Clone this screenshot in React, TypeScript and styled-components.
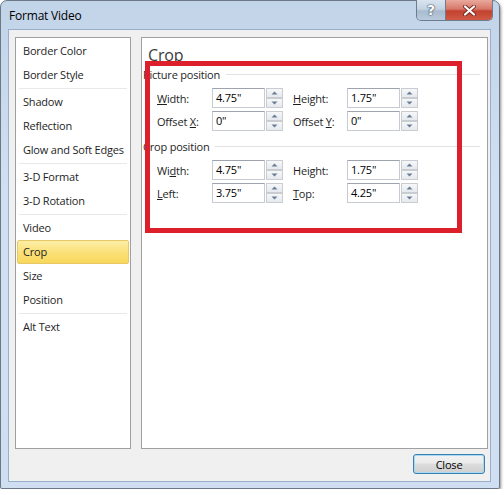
import styled, { createGlobalStyle } from "styled-components";

const GlobalStyle = createGlobalStyle`
  html, body {
    margin: 0;
    background: #ffffff;
  }
  body {
    font-family: "Open Sans", "Noto Sans", sans-serif;
    font-size: 11px;
    letter-spacing: -0.2px;
    color: #1e1e1e;
  }
`;

// access-key underline, has to exist before the field data below
const Key = styled.span`
  text-decoration: underline;
`;

type Field = { label: React.ReactNode; value: string };

const pictureFields: Field[] = [
  { label: <><Key>W</Key>idth:</>, value: '4.75"' },
  { label: <><Key>H</Key>eight:</>, value: '1.75"' },
  { label: <>Offset <Key>X</Key>:</>, value: '0"' },
  { label: <>Offset <Key>Y</Key>:</>, value: '0"' },
];

const cropFields: Field[] = [
  { label: <>Wi<Key>d</Key>th:</>, value: '4.75"' },
  { label: <>Hei<Key>g</Key>ht:</>, value: '1.75"' },
  { label: <><Key>L</Key>eft:</>, value: '3.75"' },
  { label: <><Key>T</Key>op:</>, value: '4.25"' },
];

const navGroups = [
  ["Border Color", "Border Style"],
  ["Shadow", "Reflection", "Glow and Soft Edges"],
  ["3-D Format", "3-D Rotation"],
  ["Video", "Crop", "Size", "Position"],
  ["Alt Text"],
];

function Spin() {
  return (
    <Spinner>
      <SpinButton>
        <svg width="7" height="4" viewBox="0 0 7 4">
          <path d="M0.5 3.5 L3.5 0.5 L6.5 3.5 Z" fill="#6a7d97" />
        </svg>
      </SpinButton>
      <SpinButton>
        <svg width="7" height="4" viewBox="0 0 7 4">
          <path d="M0.5 0.5 L3.5 3.5 L6.5 0.5 Z" fill="#6a7d97" />
        </svg>
      </SpinButton>
    </Spinner>
  );
}

function FieldGroup({ fields }: { fields: Field[] }) {
  return (
    <FieldGrid>
      {fields.map((f, i) => (
        <Cell key={i}>
          <FieldLabel>{f.label}</FieldLabel>
          <FieldBox>
            <TextBox>{f.value}</TextBox>
            <Spin />
          </FieldBox>
        </Cell>
      ))}
    </FieldGrid>
  );
}

export default function App() {
  return (
    <>
      <GlobalStyle />
      <Window>
        <TitleBar>
          <Title>Format Video</Title>
          <CaptionButtons>
            <HelpButton>?</HelpButton>
            <CloseCaption>
              <svg width="13" height="11" viewBox="0 0 13 11">
                <path d="M2 1.5 L11 9.5 M11 1.5 L2 9.5" stroke="#7a2a22" strokeWidth="4" strokeLinecap="round" />
                <path d="M2 1.5 L11 9.5 M11 1.5 L2 9.5" stroke="#ffffff" strokeWidth="2.2" strokeLinecap="round" />
              </svg>
            </CloseCaption>
          </CaptionButtons>
        </TitleBar>
        <Client>
          <Panes>
            <NavList>
              {navGroups.map((group, gi) => (
                <NavGroup key={gi}>
                  {gi > 0 && <NavSeparator />}
                  {group.map((item) => (
                    <NavItem key={item} $active={item === "Crop"}>
                      {item}
                    </NavItem>
                  ))}
                </NavGroup>
              ))}
            </NavList>
            <ContentPanel>
              <Heading>Crop</Heading>
              <SectionHeader>Picture position</SectionHeader>
              <FieldGroup fields={pictureFields} />
              <SectionHeader $top={7}>Crop position</SectionHeader>
              <FieldGroup fields={cropFields} />
              <Annotation />
            </ContentPanel>
          </Panes>
          <Footer>
            <DialogButton>Close</DialogButton>
          </Footer>
        </Client>
      </Window>
    </>
  );
}

const Window = styled.div`
  box-sizing: border-box;
  width: 500px;
  height: 489px;
  border: 1px solid #6c7888;
  border-radius: 7px 7px 2px 2px;
  background: linear-gradient(180deg, #c2d4e8 0%, #d1e0f1 40%, #cfdff1 100%);
  box-shadow: 1px 2px 3px rgba(0, 0, 0, 0.45);
  display: flex;
  flex-direction: column;
`;

const TitleBar = styled.div`
  height: 28px;
  display: flex;
  align-items: flex-start;
  padding: 0 6px 0 8px;
`;

const Title = styled.div`
  font-size: 12px;
  line-height: 14px;
  padding-top: 8px;
  color: #000;
`;

const CaptionButtons = styled.div`
  margin-left: auto;
  margin-top: -1px;
  display: flex;
  border: 1px solid #6f7c8d;
  border-top: none;
  border-radius: 0 0 5px 5px;
  overflow: hidden;
  height: 20px;
`;

const HelpButton = styled.div`
  width: 28px;
  display: flex;
  align-items: center;
  justify-content: center;
  background: linear-gradient(180deg, #d9e4ef 0%, #c4d3e3 45%, #a9bccf 55%, #b8cadc 100%);
  border-right: 1px solid #6f7c8d;
  color: #ffffff;
  font-family: "DejaVu Sans", sans-serif;
  font-weight: bold;
  font-size: 14px;
  letter-spacing: 0;
  text-shadow: 0 0 1px #4a5868, 0 0 1px #4a5868, 0 0 2px #4a5868;
`;

const CloseCaption = styled.div`
  width: 46px;
  display: flex;
  align-items: center;
  justify-content: center;
  background: linear-gradient(180deg, #e9a99c 0%, #d7786a 45%, #c1422f 55%, #d05a45 100%);
`;

const Client = styled.div`
  flex: 1;
  margin: 0 8px 6px 7px;
  border: 1px solid #98aecb;
  background: #f0f0f0;
  padding: 7px 2px 7px 6px;
  display: flex;
  flex-direction: column;
`;

const Panes = styled.div`
  height: 412px;
  display: flex;
  gap: 10px;
`;

const NavList = styled.div`
  box-sizing: border-box;
  width: 116px;
  background: #ffffff;
  border: 1px solid #a0a0a0;
  padding: 1px;
`;

const NavGroup = styled.div``;

const NavSeparator = styled.div`
  height: 1px;
  margin: 1px 2px;
  background: #e8e8e8;
`;

const NavItem = styled.div<{ $active?: boolean }>`
  box-sizing: border-box;
  height: 24px;
  line-height: 22px;
  padding-left: 5px;
  border: 1px solid ${(p) => (p.$active ? "#e7c866" : "transparent")};
  border-radius: 2px;
  background: ${(p) =>
    p.$active ? "linear-gradient(180deg, #fdeea6 0%, #fbe17a 50%, #f8d75a 100%)" : "transparent"};
  white-space: nowrap;
`;

const ContentPanel = styled.div`
  position: relative;
  box-sizing: border-box;
  flex: 1;
  background: #ffffff;
  border: 1px solid #a0a0a0;
  padding: 7px 0 0 1px;
`;

const Heading = styled.div`
  font-size: 16px;
  line-height: 20px;
  margin-left: 5px;
  color: #3c3c3c;
`;

const SectionHeader = styled.div<{ $top?: number }>`
  display: flex;
  align-items: center;
  height: 16px;
  margin-top: ${(p) => p.$top ?? 1}px;
  margin-right: 7px;
  white-space: nowrap;

  &::after {
    content: "";
    flex: 1;
    height: 1px;
    margin-left: 6px;
    background: #e2e2e2;
  }
`;

const FieldGrid = styled.div`
  display: grid;
  grid-template-columns: 136px 125px;
  row-gap: 3px;
  margin: 6px 0 0 14px;
`;

const Cell = styled.div`
  display: flex;
  align-items: center;
`;

const FieldLabel = styled.div`
  width: 55px;
  white-space: nowrap;
`;

const FieldBox = styled.div`
  display: flex;
  gap: 1px;
  height: 20px;
`;

const TextBox = styled.div`
  box-sizing: border-box;
  width: 53px;
  height: 20px;
  border: 1px solid #c6cbd3;
  border-top-color: #9ea4ad;
  padding-left: 3px;
  line-height: 18px;
  color: #000;
`;

const Spinner = styled.div`
  display: flex;
  flex-direction: column;
  width: 17px;
`;

const SpinButton = styled.div`
  box-sizing: border-box;
  height: 10px;
  display: flex;
  align-items: center;
  justify-content: center;
  border: 1px solid #c9ccd1;
  background: linear-gradient(180deg, #f6f7f9 0%, #e6e9ed 100%);
`;

const Annotation = styled.div`
  position: absolute;
  left: 3px;
  top: 23px;
  width: 317px;
  height: 172px;
  box-sizing: border-box;
  border: 5px solid #dc1f2a;
  pointer-events: none;
`;

const Footer = styled.div`
  display: flex;
  justify-content: flex-end;
  margin-top: 5px;
  padding-right: 3px;
`;

const DialogButton = styled.button`
  box-sizing: border-box;
  width: 72px;
  height: 20px;
  padding: 0;
  border: 1px solid #3c7fb1;
  border-radius: 3px;
  background: linear-gradient(180deg, #f2f2f2 0%, #ebebeb 45%, #dddddd 50%, #cfcfcf 100%);
  box-shadow: inset 0 0 0 1px #a6dcf2;
  font-family: "Open Sans", "Noto Sans", sans-serif;
  font-size: 11px;
  letter-spacing: -0.2px;
  color: #000;
`;
